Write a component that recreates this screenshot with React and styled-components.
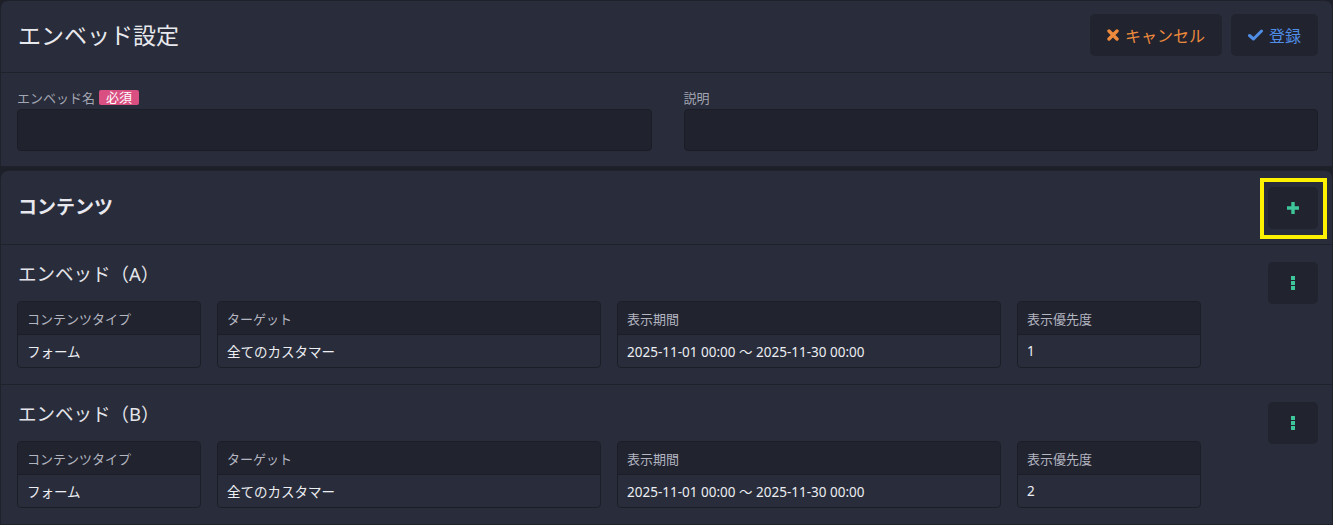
import React from 'react';
import styled, { createGlobalStyle } from 'styled-components';

const GlobalStyle = createGlobalStyle`
  body {
    margin: 0;
    background: #1e2029;
    font-family: "Noto Sans", "Noto Sans CJK JP", sans-serif;
    color: #e4e5ea;
  }
`;

const Page = styled.div`
  display: flex;
  flex-direction: column;
  gap: 3px;
`;

const Panel = styled.section`
  background: #292c3a;
  border: 1px solid #1f212b;
  border-radius: 8px 8px 0 0;
`;

const Header = styled.div`
  display: flex;
  align-items: center;
  justify-content: space-between;
  box-sizing: border-box;
  height: ${p => p.h}px;
  padding: 0 14px ${p => p.pb || 0}px 17px;
  border-bottom: 1px solid #1f212b;
`;

const Title = styled.h1`
  margin: 0;
  line-height: 1;
  font-size: ${p => p.size || 23}px;
  font-weight: ${p => p.bold ? 700 : 400};
  color: #e8e9ee;
`;

const Actions = styled.div`
  display: flex;
  gap: 9px;
`;

const ActionButton = styled.button`
  display: flex;
  align-items: center;
  gap: 6px;
  height: 42px;
  padding: 0 17px;
  border: none;
  border-radius: 5px;
  background: #21232f;
  color: ${p => p.color};
  font-family: inherit;
  font-size: 16px;
`;

const Form = styled.div`
  display: grid;
  grid-template-columns: 1fr 1fr;
  column-gap: 32px;
  padding: 16px 14px 15px 16px;
`;

const Field = styled.div`
  display: flex;
  flex-direction: column;
  gap: 4px;
`;

const Label = styled.label`
  display: flex;
  align-items: center;
  gap: 4px;
  height: 16px;
  font-size: 13px;
  color: #a3a6b3;
`;

const Badge = styled.span`
  background: #d94f82;
  color: #fff;
  font-size: 13px;
  line-height: 15px;
  padding: 0 7px;
  border-radius: 2px;
`;

const Input = styled.div`
  height: 40px;
  background: #20222e;
  border: 1px solid #1b1d26;
  border-radius: 4px;
`;

const IconButton = styled.button`
  display: flex;
  align-items: center;
  justify-content: center;
  width: 50px;
  height: 42px;
  border: none;
  border-radius: 5px;
  background: #21232f;
  padding: 0;
`;

const Marked = styled.div`
  position: relative;
`;

const Highlight = styled.div`
  position: absolute;
  top: -9px;
  bottom: -10px;
  left: -8px;
  right: -9px;
  border: 4px solid #fff200;
  pointer-events: none;
`;

const Item = styled.div`
  display: flex;
  justify-content: space-between;
  padding: 17px 14px 16px 16px;
  border-top: ${p => p.first ? 'none' : '1px solid #1f212b'};
`;

const ItemBody = styled.div`
  display: flex;
  flex-direction: column;
  gap: 15px;
`;

const ItemTitle = styled.div`
  font-size: 18.5px;
  line-height: 24px;
  color: #e4e5ea;
  margin-left: 1px;
`;

const Cells = styled.div`
  display: grid;
  grid-template-columns: 184px 384px 384px 184px;
  gap: 16px;
`;

const Cell = styled.div`
  border: 1px solid #1c1e27;
  border-radius: 4px;
  overflow: hidden;
`;

const CellHead = styled.div`
  height: 32px;
  display: flex;
  align-items: center;
  padding: 0 9px;
  background: #21232f;
  border-bottom: 1px solid #1c1e27;
  font-size: 13px;
  color: #b3b5c0;
`;

const CellValue = styled.div`
  height: 32px;
  display: flex;
  align-items: center;
  padding: 0 9px;
  font-size: 13.5px;
  color: #eceef2;
`;

const Kebab = () => (
  <svg width="6" height="16" viewBox="0 0 6 16">
    <rect x="1" y="1" width="4" height="4" fill="#3fc59a" />
    <rect x="1" y="6" width="4" height="4" fill="#3fc59a" />
    <rect x="1" y="11" width="4" height="4" fill="#3fc59a" />
  </svg>
);

const items = [
  { name: 'エンベッド（A）', priority: '1' },
  { name: 'エンベッド（B）', priority: '2' },
];

const App = () => (
  <Page>
    <GlobalStyle />
    <Panel>
      <Header h={72} pb={3}>
        <Title>エンベッド設定</Title>
        <Actions>
          <ActionButton color="#ee8a3c">
            <svg width="12" height="12" viewBox="0 0 12 12">
              <path d="M2 2 L10 10 M10 2 L2 10" stroke="#ee8a3c" strokeWidth="3.4" strokeLinecap="round" />
            </svg>
            キャンセル
          </ActionButton>
          <ActionButton color="#4f8de6">
            <svg width="15" height="12" viewBox="0 0 15 12">
              <path d="M1.5 6.5 L5.5 10 L13.5 2" stroke="#4f8de6" strokeWidth="3" fill="none" strokeLinecap="round" strokeLinejoin="round" />
            </svg>
            登録
          </ActionButton>
        </Actions>
      </Header>
      <Form>
        <Field>
          <Label>エンベッド名<Badge>必須</Badge></Label>
          <Input />
        </Field>
        <Field>
          <Label>説明</Label>
          <Input />
        </Field>
      </Form>
    </Panel>
    <Panel>
      <Header h={74}>
        <Title size={19} bold>コンテンツ</Title>
        <Marked>
          <IconButton>
            <svg width="14" height="14" viewBox="0 0 14 14">
              <path d="M7 1 V13 M1 7 H13" stroke="#3fc59a" strokeWidth="3.4" />
            </svg>
          </IconButton>
          <Highlight />
        </Marked>
      </Header>
      {items.map((it, i) => (
        <Item key={it.name} first={i === 0}>
          <ItemBody>
            <ItemTitle>{it.name}</ItemTitle>
            <Cells>
              <Cell>
                <CellHead>コンテンツタイプ</CellHead>
                <CellValue>フォーム</CellValue>
              </Cell>
              <Cell>
                <CellHead>ターゲット</CellHead>
                <CellValue>全てのカスタマー</CellValue>
              </Cell>
              <Cell>
                <CellHead>表示期間</CellHead>
                <CellValue>2025-11-01 00:00 〜 2025-11-30 00:00</CellValue>
              </Cell>
              <Cell>
                <CellHead>表示優先度</CellHead>
                <CellValue>{it.priority}</CellValue>
              </Cell>
            </Cells>
          </ItemBody>
          <IconButton><Kebab /></IconButton>
        </Item>
      ))}
    </Panel>
  </Page>
);

export default App;
